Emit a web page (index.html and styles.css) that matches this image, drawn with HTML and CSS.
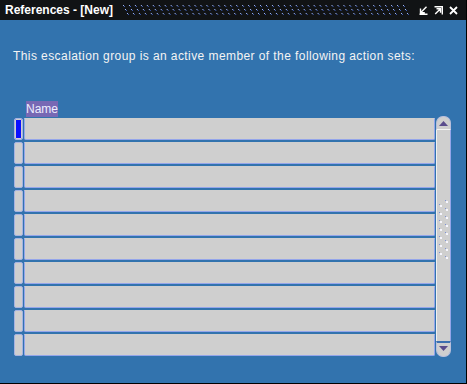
FILE: index.html
```html
<!DOCTYPE html>
<html>
<head>
<meta charset="utf-8">
<title>References - [New]</title>
<link rel="stylesheet" href="styles.css">
</head>
<body>
<div class="window">
  <div class="titlebar">
    <span class="title">References - [New]</span>
    <svg class="grip" width="288" height="12" viewBox="0 0 288 12">
      <defs>
        <pattern id="dots" width="6" height="12" patternUnits="userSpaceOnUse">
          <rect x="0" y="1" width="1" height="1" fill="#a4bcff"/>
          <rect x="1" y="2" width="1" height="1" fill="#3d5cb8"/>
          <rect x="2" y="5" width="1" height="1" fill="#a4bcff"/>
          <rect x="3" y="6" width="1" height="1" fill="#3d5cb8"/>
          <rect x="4" y="9" width="1" height="1" fill="#a4bcff"/>
          <rect x="5" y="10" width="1" height="1" fill="#3d5cb8"/>
        </pattern>
      </defs>
      <rect x="0" y="0" width="288" height="12" fill="url(#dots)"/>
    </svg>
    <div class="ctrls">
      <svg class="ctl" width="9" height="9" viewBox="0 0 9 9"><path d="M0.5 8.3H8.5M1.5 2.5V6.8H5.8M1.8 6.5L7.5 0.8" fill="none" stroke="#fff" stroke-width="1.4"/></svg>
      <svg class="ctl" width="9" height="9" viewBox="0 0 9 9"><path d="M0.5 0.7H8.3V8.5M1.2 8L6 3.2M2.5 2.7H6.5V6.7" fill="none" stroke="#fff" stroke-width="1.4"/></svg>
      <svg class="ctl" width="9" height="9" viewBox="0 0 9 9"><path d="M1 1L8 8M8 1L1 8" fill="none" stroke="#fff" stroke-width="1.8"/></svg>
    </div>
  </div>
  <div class="content">
    <p class="intro">This escalation group is an active member of the following action sets:</p>
    <div class="block">
      <div class="label-row"><span class="label">Name</span></div>
      <div class="grid">
        <div class="rows">
          <div class="row"><div class="sel current"></div><div class="field"></div></div>
          <div class="row"><div class="sel"></div><div class="field"></div></div>
          <div class="row"><div class="sel"></div><div class="field"></div></div>
          <div class="row"><div class="sel"></div><div class="field"></div></div>
          <div class="row"><div class="sel"></div><div class="field"></div></div>
          <div class="row"><div class="sel"></div><div class="field"></div></div>
          <div class="row"><div class="sel"></div><div class="field"></div></div>
          <div class="row"><div class="sel"></div><div class="field"></div></div>
          <div class="row"><div class="sel"></div><div class="field"></div></div>
          <div class="row"><div class="sel"></div><div class="field"></div></div>
        </div>
        <div class="scrollbar">
          <div class="sb-btn up">
            <svg width="9" height="5" viewBox="0 0 9 5"><path d="M4.5 0L9 5H0Z" fill="#5a4c8c"/></svg>
          </div>
          <div class="track">
            <svg class="thumb" width="9" height="60" viewBox="0 0 9 60">
              <defs>
                <g id="d"><rect x="0" y="0" width="1" height="1" fill="#7f92d6"/><rect x="1" y="1" width="2" height="2" fill="#f6f6ff"/></g>
              </defs>
              <use href="#d" x="0" y="4"/><use href="#d" x="0" y="12"/><use href="#d" x="0" y="20"/><use href="#d" x="0" y="28"/><use href="#d" x="0" y="36"/><use href="#d" x="0" y="44"/><use href="#d" x="0" y="52"/>
              <use href="#d" x="6" y="0"/><use href="#d" x="6" y="8"/><use href="#d" x="6" y="16"/><use href="#d" x="6" y="24"/><use href="#d" x="6" y="32"/><use href="#d" x="6" y="40"/><use href="#d" x="6" y="48"/><use href="#d" x="6" y="56"/>
            </svg>
          </div>
          <div class="sb-btn down">
            <svg width="9" height="5" viewBox="0 0 9 5"><path d="M0 0H9L4.5 5Z" fill="#5a4c8c"/></svg>
          </div>
        </div>
      </div>
    </div>
  </div>
</div>
</body>
</html>
```

FILE: styles.css
```css
html, body {
  margin: 0;
  padding: 0;
  background: #3273ae;
}

body {
  font-family: "Liberation Sans", Arial, sans-serif;
}

.window {
  width: 467px;
  height: 384px;
  box-sizing: border-box;
  background: #3273ae;
  border-right: 1px solid #000;
  border-bottom: 1px solid #000;
  display: flex;
  flex-direction: column;
}

.titlebar {
  height: 20px;
  background: #111315;
  display: flex;
  align-items: center;
  padding: 0 8px 0 5px;
  flex: none;
}

.title {
  color: #fff;
  font-weight: bold;
  font-size: 12px;
  line-height: 20px;
  white-space: nowrap;
}

.grip {
  display: block;
  margin-left: 10px;
  margin-right: 10px;
  flex: 1;
  height: 12px;
}

.ctrls {
  display: flex;
  align-items: center;
  gap: 6px;
}

.ctl {
  display: block;
}

.content {
  flex: 1;
  padding: 0;
}

.intro {
  margin: 29px 0 0 13px;
  color: #f4f4f4;
  font-size: 12px;
  line-height: 14px;
  letter-spacing: 0.42px;
  white-space: nowrap;
}

.block {
  margin: 38px 0 0 14px;
}

.label-row {
  display: flex;
  padding-left: 12px;
  margin-bottom: 1px;
}

.label {
  display: block;
  height: 16px;
  line-height: 16px;
  font-size: 12px;
  color: #eeeeff;
  background-color: #57539a;
  background-image: radial-gradient(circle, #7a6ab6 0.7px, transparent 0.8px);
  background-size: 2px 2px;
}

.grid {
  display: flex;
  align-items: stretch;
}

.rows {
  display: flex;
  flex-direction: column;
  gap: 2px;
}

.row {
  display: flex;
  gap: 1px;
  height: 22px;
}

.sel {
  width: 9px;
  box-sizing: border-box;
  border: 1px solid #a6b3e2;
  border-radius: 2px;
  background: #cfcfcf;
}

.sel.current {
  background: #0a10ff;
  box-shadow: inset 0 0 0 1px #cfcfcf;
  border-radius: 2px;
}

.field {
  width: 411px;
  box-sizing: border-box;
  background: #cfcfcf;
  border: 1px solid #94a5ea;
  border-top-color: #cfcfcf;
  border-radius: 0 0 2px 2px;
}

.scrollbar {
  width: 15px;
  margin-left: 1px;
  margin-top: -2px;
  margin-bottom: -1px;
  display: flex;
  flex-direction: column;
}

.sb-btn {
  height: 14px;
  flex: none;
  box-sizing: border-box;
  background: #cfcfcf;
  display: flex;
  align-items: center;
  justify-content: center;
}

.sb-btn.up {
  border-radius: 7px 7px 0 0;
  border: 1px solid #b8bfdc;
  border-bottom: 1px solid #f4f4f4;
  padding-top: 1px;
}

.sb-btn.down {
  height: 16px;
  border-radius: 0 0 7px 7px;
  border: 1px solid #b8bfdc;
  border-top: 2px solid #3b6fb0;
  padding-bottom: 2px;
}

.track {
  flex: 1;
  box-sizing: border-box;
  background: #cfcfcf;
  border-left: 1px solid #f0f0f0;
  border-right: 1px solid #94a5ea;
  display: flex;
  flex-direction: column;
  align-items: flex-start;
}

.thumb {
  display: block;
  margin-top: 70px;
  margin-left: 2px;
}
```
